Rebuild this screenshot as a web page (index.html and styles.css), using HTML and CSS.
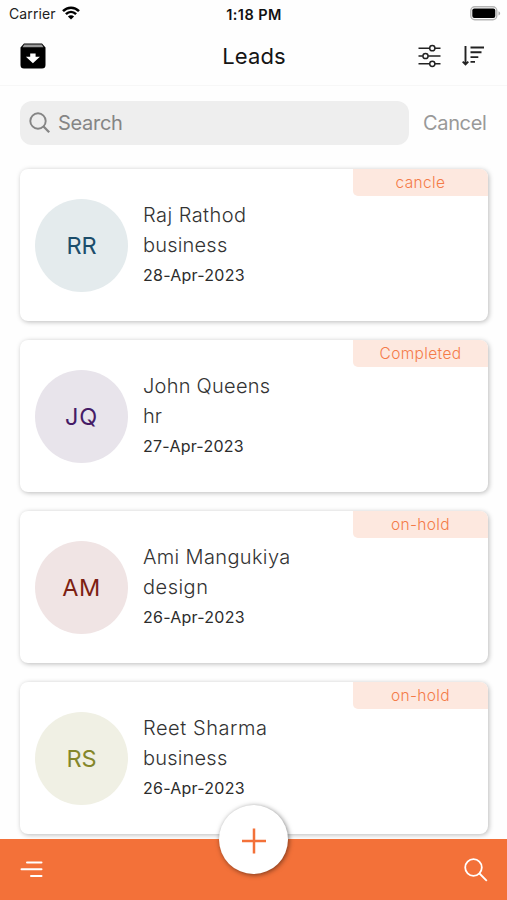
FILE: index.html
```html
<!DOCTYPE html>
<html lang="en">
<head>
<meta charset="utf-8">
<title>Leads</title>
<link rel="stylesheet" href="styles.css">
</head>
<body>
<div class="app">
  <div class="status">
    <div class="carrier"><span>Carrier</span>
      <svg width="18" height="14" viewBox="0 0 18 14" fill="none" stroke="#000" stroke-width="2.5"><path d="M1 5.2C5.5.6 12.500.6 17 5.200M3.900 8.200c3-2.900 7.200-2.900 10.200 0"/><path d="M9 13.500 5.900 10.500c1.800-1.700 4.400-1.700 6.200 0z" fill="#000" stroke="none"/></svg>
    </div>
    <div class="time">1:18 PM</div>
    <svg class="battery" width="31" height="15" viewBox="0 0 31 15"><rect x=".8" y=".8" width="26" height="13" rx="4" fill="#fff" stroke="#b5b5b5" stroke-width="1.400"/><rect x="2.300" y="2.500" width="23" height="9.600" rx="2" fill="#000"/><path d="M28.500 5.200c2.200.8 2.200 3.400 0 4.200z" fill="#aaa"/></svg>
  </div>
  <header class="header">
    <svg width="26" height="26" viewBox="0 0 26 26"><path d="M4 .5h18l3.500 4V22a3.500 3.500 0 0 1-3.500 3.500H4A3.500 3.500 0 0 1 .5 22V4.500z" fill="#000"/><path d="M4.200 1.500h17.600l1.700 2.700h-21z" fill="#999"/><path d="M10.200 10.500h5.400v3.300h4.300L12.900 20.300l-7-6.500h4.300z" fill="#fff"/></svg>
    <h1>Leads</h1>
    <div class="tools">
      <svg width="23" height="24" viewBox="0 0 23 24" fill="none" stroke="#222" stroke-width="1.500"><path d="M.5 4.200h11M17 4.200h5.500M.5 12h4.200M10.200 12h12.300M.5 19.800h11M17 19.800h5.500"/><circle cx="14.300" cy="4.200" r="2.600"/><circle cx="7.500" cy="12" r="2.600"/><circle cx="14.300" cy="19.800" r="2.600"/></svg>
      <svg width="23" height="20" viewBox="0 0 23 20" fill="none" stroke="#222" stroke-width="1.900"><path d="M3.500 0v18M.7 15.600l2.800 2.900 2.800-2.900M8.500 1.500h13.500M8.500 6.300H19.500M8.500 11.100h7.800M8.500 15.900h4.500"/></svg>
    </div>
  </header>
  <div class="search-row">
    <div class="search">
      <svg width="22" height="22" viewBox="0 0 22 22" fill="none" stroke="#858585" stroke-width="1.900"><circle cx="9" cy="9" r="7.700"/><path d="m14.500 14.500 5.700 5.700" stroke-width="2.300"/></svg>
      <span>Search</span>
    </div>
    <span class="cancel">Cancel</span>
  </div>
  <main class="list">
    <article class="card">
      <div class="avatar blue">RR</div>
      <div class="info"><p class="n1">Raj Rathod</p><p class="business">business</p><time>28-Apr-2023</time></div>
      <span class="badge">cancle</span>
    </article>
    <article class="card">
      <div class="avatar purple">JQ</div>
      <div class="info"><p class="n2">John Queens</p><p>hr</p><time>27-Apr-2023</time></div>
      <span class="badge">Completed</span>
    </article>
    <article class="card">
      <div class="avatar red">AM</div>
      <div class="info"><p class="n3">Ami Mangukiya</p><p class="design">design</p><time>26-Apr-2023</time></div>
      <span class="badge">on-hold</span>
    </article>
    <article class="card">
      <div class="avatar olive">RS</div>
      <div class="info"><p class="n4">Reet Sharma</p><p class="business">business</p><time>26-Apr-2023</time></div>
      <span class="badge">on-hold</span>
    </article>
  </main>
  <nav class="bottom">
    <svg width="23" height="17" viewBox="0 0 23 17" fill="none" stroke="#fff" stroke-width="2" stroke-linecap="round"><path d="M7 1.500h14.500M1.500 8.200h20M11 15h10.500"/></svg>
    <svg width="24" height="24" viewBox="0 0 24 24" fill="none" stroke="#fff" stroke-width="1.800"><circle cx="9.500" cy="9.500" r="8.300"/><path d="m15.500 15.500 7.300 7.300"/></svg>
    <div class="fab"><svg width="26" height="26" viewBox="0 0 26 26" fill="none" stroke="#f37139" stroke-width="2.500"><path d="M13 .5v25M1 13h24"/></svg></div>
  </nav>
</div>
</body>
</html>
```

FILE: styles.css
```css
* { box-sizing: border-box; }
body { margin: 0; background: #fff; font-family: Inter, "Liberation Sans", sans-serif; color: #333; }
.app { width: 507px; height: 900px; display: flex; flex-direction: column; overflow: hidden; background: #fefefe; }
.status { height: 28px; flex: none; display: grid; grid-template-columns: 1fr auto 1fr; align-items: center; padding: 0 6px 0 9px; color: #222; }
.carrier { display: flex; align-items: center; gap: 6px; font-size: 14px; letter-spacing: 0.1px; }
.carrier span { margin-top: -1px; }
.carrier svg { margin-top: -3px; }
.time { font-size: 14.5px; font-weight: 600; letter-spacing: 0.4px; margin-right: 2px; color: #111; }
.battery { justify-self: end; margin-top: -2px; }
.header { height: 58px; flex: none; display: grid; grid-template-columns: 1fr auto 1fr; align-items: center; padding: 0 22px 2px 23px; border-bottom: 1px solid #f7f7f7; }
.header > svg { margin-left: -3px; }
.header h1 { margin: 0; font-size: 22px; font-weight: 400; letter-spacing: 0.1px; color: #151515; }
.tools { display: flex; align-items: center; justify-content: flex-end; gap: 21px; }
.search-row { display: flex; align-items: center; gap: 14px; padding: 15px 20px 0; flex: none; }
.search { width: 389px; flex: none; height: 44px; border-radius: 12px; background: #eee; display: flex; align-items: center; gap: 7px; padding-left: 9px; color: #858585; font-size: 20px; letter-spacing: -0.3px; }
.cancel { font-size: 20px; letter-spacing: -0.35px; color: #999; white-space: nowrap; }
.list { display: flex; flex-direction: column; gap: 19px; padding: 24px 19px 0 20px; flex: 1; min-height: 0; overflow: hidden; }
.card { position: relative; height: 152px; flex: none; display: flex; gap: 15px; padding: 30px 15px; background: #fff; border-radius: 8px; box-shadow: 1px 1px 5px rgba(0,0,0,.27); }
.avatar { width: 93px; height: 93px; flex: none; border-radius: 50%; display: flex; align-items: center; justify-content: center; font-size: 23.5px; }
.blue { background: #e4ebed; color: #1b4d6b; }
.purple { background: #e8e4eb; color: #451b66; letter-spacing: 0.8px; }
.red { background: #f0e4e4; color: #7d1f12; letter-spacing: 0.5px; }
.olive { background: #f0f0e4; color: #85872a; }
.info { padding-top: 2px; white-space: nowrap; }
.info p { margin: 0; font-size: 20px; font-weight: 300; line-height: 29.5px; }
.info .n1 { letter-spacing: 0.45px; }
.info .n2 { letter-spacing: 0.25px; }
.info .n3 { letter-spacing: 0.35px; }
.info .n4 { letter-spacing: 0.55px; }
.info .business { letter-spacing: 0.2px; }
.info .design { letter-spacing: 0.5px; }
.info time { display: block; font-size: 16px; letter-spacing: 0.25px; line-height: 30px; color: #2c2c2c; }
.badge { position: absolute; right: 0; top: 0; width: 135px; height: 27px; border-radius: 0 8px 0 5px; background: #fde8df; color: #f47b48; font-size: 15.5px; font-weight: 300; line-height: 28px; letter-spacing: 0.35px; text-align: center; }
.bottom { position: relative; height: 61px; flex: none; display: flex; align-items: center; justify-content: space-between; padding: 0 19px 0 20px; background: #f37139; }
.fab { position: absolute; left: 219px; top: -34px; width: 69px; height: 69px; border-radius: 50%; background: #fff; display: flex; align-items: center; justify-content: center; padding-top: 2px; box-shadow: 1px 1px 5px rgba(0,0,0,.5); }
```
